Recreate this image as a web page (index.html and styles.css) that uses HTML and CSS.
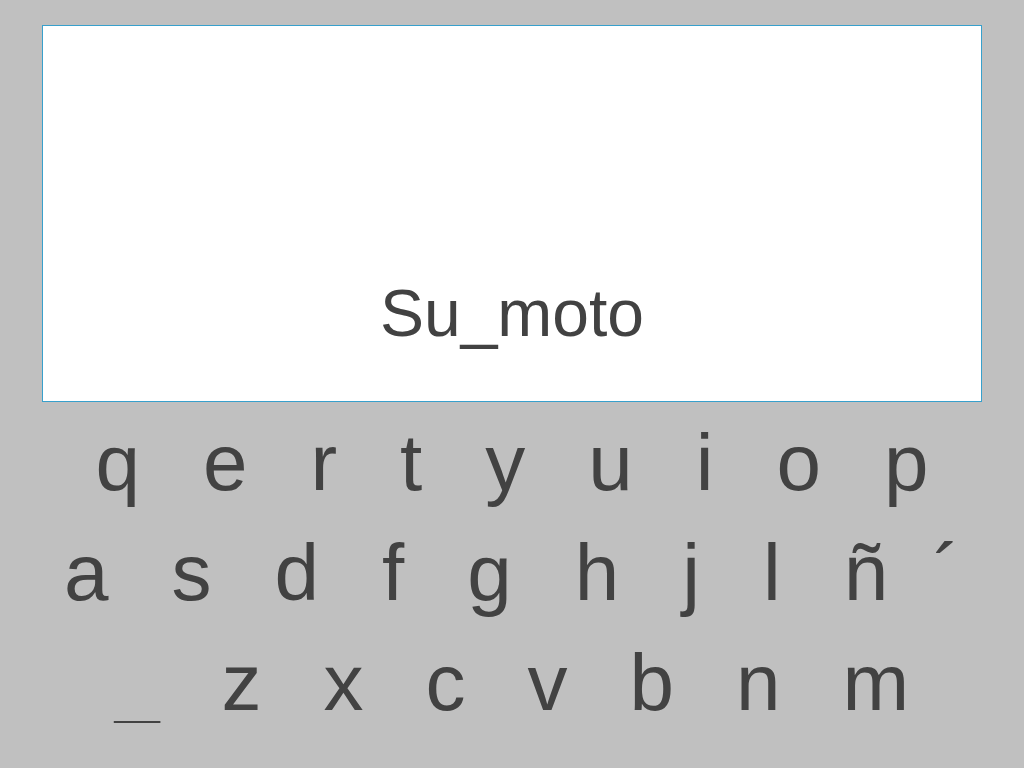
FILE: index.html
```html
<!DOCTYPE html>
<html lang="es">

<head>
    <meta charset="UTF-8">
    <meta name="viewport" content="width=device-width, initial-scale=1.0">
    <title>Teclado</title>
    <link rel="stylesheet" href="styles.css">
</head>

<body>
    <!-- Pantalla -->
    <div class="screen">
        <p class="word">Su_moto</p>
    </div>

    <!-- Teclado -->
    <div class="keyboard">
        <div class="row">
            <span class="key">q</span>
            <span class="key">e</span>
            <span class="key">r</span>
            <span class="key">t</span>
            <span class="key">y</span>
            <span class="key">u</span>
            <span class="key">i</span>
            <span class="key">o</span>
            <span class="key">p</span>
        </div>
        <div class="row">
            <span class="key">a</span>
            <span class="key">s</span>
            <span class="key">d</span>
            <span class="key">f</span>
            <span class="key">g</span>
            <span class="key">h</span>
            <span class="key">j</span>
            <span class="key">l</span>
            <span class="key">ñ</span>
            <span class="key accent">´</span>
        </div>
        <div class="row bottom">
            <span class="key">_</span>
            <span class="key">z</span>
            <span class="key">x</span>
            <span class="key">c</span>
            <span class="key">v</span>
            <span class="key">b</span>
            <span class="key">n</span>
            <span class="key">m</span>
        </div>
    </div>
</body>

</html>
```

FILE: styles.css
```css
body {
    margin: 0;
    background-color: #c0c0c0;
    font-family: "Liberation Sans", Arial, sans-serif;
    color: #424242;
}

.screen {
    box-sizing: border-box;
    margin: 25px 42px 0;
    height: 377px;
    background-color: #ffffff;
    border: 1px solid #38a0cc;
    display: flex;
    flex-direction: column;
    justify-content: flex-end;
    align-items: center;
    padding-bottom: 55px;
}

.word {
    margin: 0;
    font-size: 66px;
    line-height: 1;
}

.keyboard {
    display: flex;
    flex-direction: column;
    align-items: center;
    gap: 30px;
    margin-top: 21px;
}

.row {
    display: flex;
    justify-content: center;
    gap: 63px;
}

.row.bottom {
    gap: 62px;
}

.key {
    font-size: 80px;
    line-height: 1;
    cursor: pointer;
}

.key.accent {
    margin-left: -18px;
}
```
